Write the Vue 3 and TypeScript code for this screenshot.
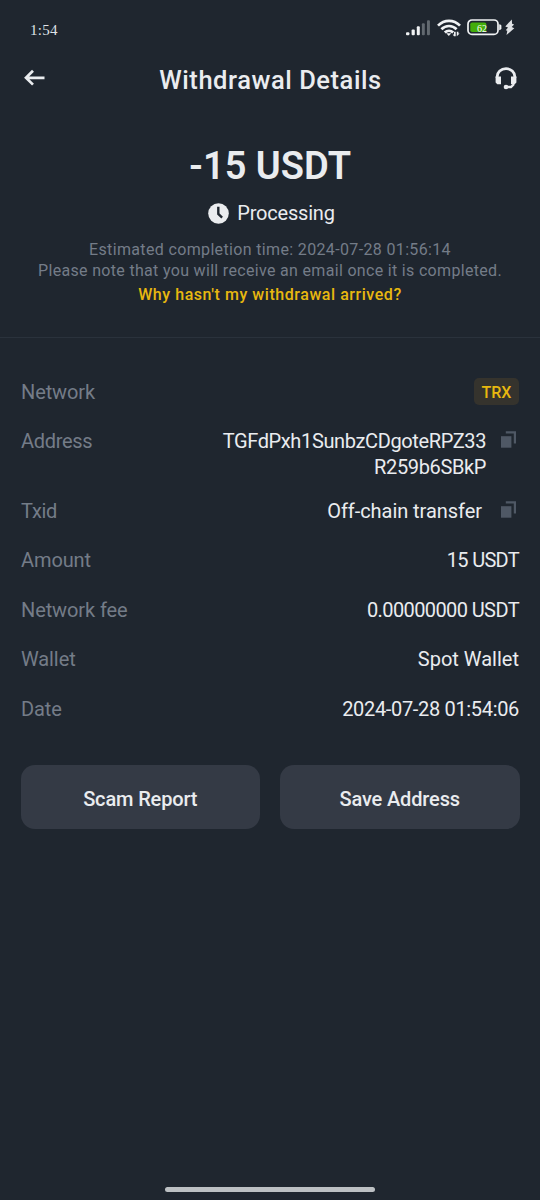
<script setup lang="ts">
interface Detail {
  label: string
  lines: string[]
  kind: 'network' | 'address' | 'txid' | 'quantity' | 'fee' | 'wallet' | 'date'
  copy?: boolean
}

const details: Detail[] = [
  { label: 'Network', lines: ['TRX'], kind: 'network' },
  { label: 'Address', lines: ['TGFdPxh1SunbzCDgoteRPZ33', 'R259b6SBkP'], kind: 'address', copy: true },
  { label: 'Txid', lines: ['Off-chain transfer'], kind: 'txid', copy: true },
  { label: 'Amount', lines: ['15 USDT'], kind: 'quantity' },
  { label: 'Network fee', lines: ['0.00000000 USDT'], kind: 'fee' },
  { label: 'Wallet', lines: ['Spot Wallet'], kind: 'wallet' },
  { label: 'Date', lines: ['2024-07-28 01:54:06'], kind: 'date' },
]
</script>

<template>
  <main class="screen">
    <div class="status">
      <span class="clock">1:54</span>
      <div class="status-icons">
        <svg class="signal" width="24" height="16" viewBox="0 0 24 16">
          <rect x="0" y="12.3" width="3.4" height="3" rx="1" fill="#f0f2f4" />
          <rect x="5.6" y="9.6" width="3.2" height="5.7" rx="1" fill="#f0f2f4" />
          <rect x="10.8" y="6.3" width="3" height="9" rx="1" fill="#f0f2f4" />
          <rect x="15.9" y="3.3" width="2.9" height="12" rx="1" fill="#626970" />
          <rect x="21" y="0.2" width="2.9" height="15.1" rx="1" fill="#626970" />
        </svg>
        <svg class="wifi" width="24" height="18" viewBox="0 0 24 18">
          <g fill="none" stroke="#f0f2f4" stroke-width="2.7">
            <path d="M1 6.6C7.3 .3 16.7 .3 23 6.6" />
            <path d="M4.4 10.2c4.3-4.3 10.9-4.3 15.2 0" />
            <path d="M7.8 13.5c2.4-2.3 6-2.3 8.4 0" />
          </g>
          <path d="M9.3 14.3h5l-2.5 2.8z" fill="#f0f2f4" />
          <path d="M17 12.8h1.7v4.4H17l-1.300-1.700H17zM19.800 17.200v-4.400h1.600v1.700h1.200z" fill="#f0f2f4" />
        </svg>
        <div class="battery">
          <svg width="36" height="17" viewBox="0 0 36 17">
            <rect x="1" y="1" width="30" height="14.4" rx="4" fill="none" stroke="#f0f2f4" stroke-width="1.7" />
            <rect x="3.3" y="3.4" width="16" height="9.6" rx="1.8" fill="#43ad0b" />
            <path d="M32.2 5.200q2.200.2 2.200 1.600v2.800q0 1.400-2.200 1.600z" fill="#f0f2f4" />
          </svg>
          <span class="charge">62</span>
        </div>
        <svg class="bolt" width="10" height="17" viewBox="0 0 10 17">
          <path d="M6.8 .4.3 7.4l2.700 1.200L.8 11.200l1.500.6L1.500 16 9.300 9.200 6.700 8.100l2.400-2.600-2-.8z" fill="#dfe1e4" />
        </svg>
      </div>
    </div>

    <header class="header">
      <svg class="back" width="22" height="18" viewBox="0 0 22 18">
        <path d="M20.5 8.8H2M9 1.8 2 8.8l7 6.8" fill="none" stroke="#eaecef" stroke-width="2.7" />
      </svg>
      <h1 class="title">Withdrawal Details</h1>
      <svg class="support" width="22" height="23" viewBox="0 0 22 23">
        <path d="M2.1 11V10C2.1 5.2 6 1.7 11 1.7s8.900 3.500 8.900 8.300v1" fill="none" stroke="#eaecef" stroke-width="2.8" />
        <path d="M.6 9.500h5.400v7.800H2.300L.6 15.500zM21.400 9.500H16v7.800h3.700l1.700-1.800z" fill="#eaecef" />
        <path d="M18.300 16v1.700L16 20h-5" fill="none" stroke="#eaecef" stroke-width="2.3" />
        <circle cx="11" cy="20" r="2.3" fill="#eaecef" />
      </svg>
    </header>

    <section class="summary">
      <div class="total">-15 USDT</div>
      <div class="state">
        <svg width="21" height="21" viewBox="0 0 22 22">
          <circle cx="11" cy="11" r="10.8" fill="#eaecef" />
          <path d="M10.800 3.800v7.700l4 3.700" fill="none" stroke="#1f262f" stroke-width="2.5" />
        </svg>
        <span class="processing">Processing</span>
      </div>
      <p class="note estimate">Estimated completion time: 2024-07-28 01:56:14</p>
      <p class="note notice">Please note that you will receive an email once it is completed.</p>
      <a class="help">Why hasn't my withdrawal arrived?</a>
    </section>

    <dl class="details">
      <div v-for="item in details" :key="item.kind" class="row" :class="item.kind">
        <dt>{{ item.label }}</dt>
        <dd>
          <span class="value">
            <span v-for="line in item.lines" :key="line" class="line">{{ line }}</span>
          </span>
          <svg v-if="item.copy" class="copy" width="15" height="17" viewBox="0 0 15 17">
            <path d="M0 5.200h10.400V16.700H0z" fill="#4f5865" />
            <path d="M4.800 1.300h9.100v11.200" fill="none" stroke="#4f5865" stroke-width="2.2" />
          </svg>
        </dd>
      </div>
    </dl>

    <div class="actions">
      <button class="scam">Scam Report</button>
      <button class="save">Save Address</button>
    </div>

    <div class="home-bar"></div>
  </main>
</template>

<style>
body {
  margin: 0;
  background: #1f262f;
}
</style>

<style scoped>
.screen {
  box-sizing: border-box;
  display: flex;
  flex-direction: column;
  width: 540px;
  height: 1200px;
  background: #1f262f;
  color: #eaecef;
  font-family: Roboto, "Noto Sans", sans-serif;
  font-size: 20px;
  overflow: hidden;
}
svg { display: block; flex: none; }

.status {
  display: flex;
  justify-content: space-between;
  height: 54px;
  padding: 0 25px 0 30px;
}
.clock {
  margin-top: 20px;
  font: 15px/20px "Liberation Serif", serif;
  letter-spacing: 0.3px;
  color: #dfe2e6;
}
.status-icons { display: flex; align-items: flex-start; }
.signal { margin-top: 20px; }
.wifi { margin: 19px 0 0 7px; }
.battery { position: relative; margin: 19px 0 0 6px; }
.charge {
  position: absolute;
  left: 10px;
  top: 4px;
  font: 10px/11px "Liberation Serif", serif;
  color: #fff;
}
.bolt { margin: 19px 0 0 2px; }

.header {
  display: grid;
  grid-template-columns: 60px 1fr 60px;
  align-items: center;
  height: 50px;
  padding: 0 23px 0 24px;
}
.back { margin-top: -3px; }
.support { justify-self: end; margin-top: -2px; }
.title {
  margin: 1px 0 0;
  text-align: center;
  font-size: 25.5px;
  line-height: 30px;
  font-weight: 500;
  letter-spacing: 0.55px;
  white-space: nowrap;
}

.summary {
  box-sizing: border-box;
  display: flex;
  flex-direction: column;
  align-items: center;
  height: 234px;
  padding-top: 40px;
  border-bottom: 1px solid #2a323c;
  white-space: nowrap;
}
.total {
  font-size: 38px;
  line-height: 44px;
  font-weight: 600;
}
.state {
  display: flex;
  align-items: center;
  gap: 8px;
  height: 30px;
  padding-left: 3px;
  margin-top: 10px;
  margin-bottom: 11px;
}
.processing { letter-spacing: -0.2px; }
.note {
  margin: 0;
  font-size: 16px;
  line-height: 21px;
  color: #747c88;
}
.estimate { letter-spacing: 0.35px; }
.notice { letter-spacing: 0.32px; }
.help {
  margin-top: 3px;
  font-size: 16px;
  line-height: 22px;
  font-weight: 500;
  letter-spacing: 0.55px;
  color: #e8b80f;
}

.details {
  margin: 28.5px 21px 0;
}
.row {
  display: flex;
  justify-content: space-between;
  box-sizing: border-box;
  height: 49.5px;
  padding-top: 12px;
  line-height: 26px;
}
.row.address { height: 69.5px; }
dt { color: #747c88; letter-spacing: -0.1px; }
.address dt, .txid dt { letter-spacing: -0.3px; }
dd { display: flex; margin: 0; }
.value { text-align: right; white-space: nowrap; }
.line { display: block; }
.address .value { letter-spacing: -0.37px; }
.txid .value { letter-spacing: -0.05px; }
.quantity .value { letter-spacing: -0.7px; }
.fee .value { letter-spacing: -0.6px; }
.date .value { letter-spacing: -0.33px; }
.copy { margin: 3px 3px 0 15px; }
.txid .copy { margin-left: 19px; }
.network .value {
  box-sizing: border-box;
  width: 45px;
  height: 27px;
  margin-top: -1px;
  border-radius: 5px;
  background: #35332d;
  color: #e8b80f;
  font-size: 16px;
  font-weight: 500;
  line-height: 29px;
  text-align: center;
}

.actions {
  display: grid;
  grid-template-columns: 1fr 1fr;
  gap: 20px;
  margin: 32px 20.5px 0;
}
button {
  height: 64px;
  padding: 3px 0 0;
  border: 0;
  border-radius: 14px;
  background: #343a45;
  color: #eaecef;
  font: 500 20px/26px Roboto, "Noto Sans", sans-serif;
  letter-spacing: -0.15px;
}

.home-bar {
  width: 210px;
  height: 5px;
  margin: auto auto 8px;
  border-radius: 3px;
  background: #bcc0c3;
}
</style>
